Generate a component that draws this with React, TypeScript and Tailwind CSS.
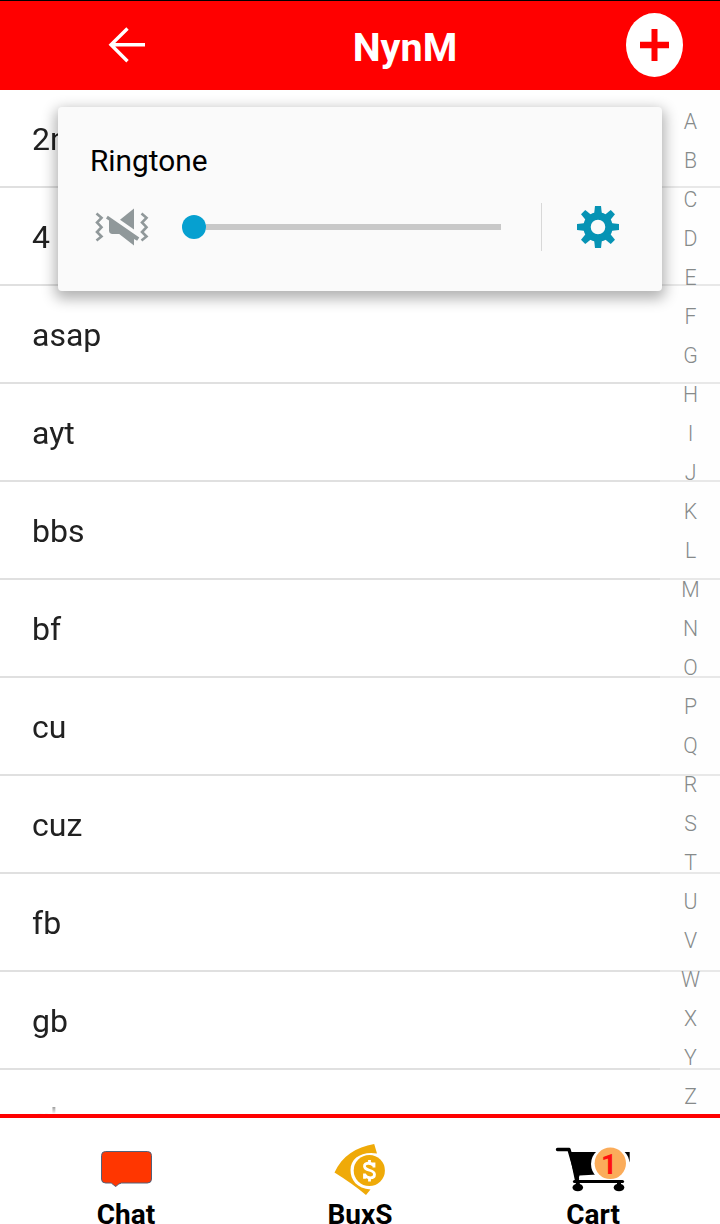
const words = ["2nite", "4", "asap", "ayt", "bbs", "bf", "cu", "cuz", "fb", "gb", "gl"];
const letters = "ABCDEFGHIJKLMNOPQRSTUVWXYZ".split("");

function BackArrow() {
  return (
    <svg className="-mt-px ml-[108px] h-9 w-10" viewBox="0 0 40 36" fill="none" stroke="#fff" strokeWidth="3.4">
      <path d="M19.500 1.500 3 17.800l16.500 16.400M3 17.800h34" />
    </svg>
  );
}

function AddButton() {
  return (
    <svg className="-mt-px h-16 w-[57px]" viewBox="0 0 57 64">
      <ellipse cx="28.5" cy="32" rx="28.5" ry="32" fill="#fff" />
      <path d="M25.500 16h6v12.800H43v6.400H31.500V48h-6V35.200H14v-6.400h11.500z" fill="#f00" />
    </svg>
  );
}

function MutedVibrate() {
  return (
    <svg className="h-10 w-[54px]" viewBox="0 0 54 40">
      <g fill="none" stroke="#90989a" strokeWidth="2.6">
        <path d="M1.500 6.500 6.500 10.800 2 15.500l4.500 4.700L2 25l4.500 4.500-5 4" />
        <path d="M46.500 6.500 51.500 10.800 47 15.500l4.500 4.700L47 25l4.500 4.500-5 4" />
      </g>
      <g fill="#90989a">
        <path d="M25 12.800 39 1.500v21z" />
        <path d="M12.800 8.800 44.300 30.500l-2.200 3.300L39 32v6.600L24.200 27H17q-3-.5-3-3.500V13.500L11 11.400z" />
      </g>
    </svg>
  );
}

function Gear() {
  return (
    <svg className="h-[42px] w-[42px]" viewBox="-21 -21 42 42" fill="#0693b4">
      <circle r="11" fill="none" stroke="#0693b4" strokeWidth="7.4" />
      {[0, 45, 90, 135, 180, 225, 270, 315].map((a) => (
        <path key={a} d="M-4-12-3-21H3L4-12z" transform={`rotate(${a})`} />
      ))}
    </svg>
  );
}

function VolumePanel() {
  return (
    <div className="absolute left-[58px] top-[107px] h-[184px] w-[604px] rounded bg-[#fafafa] shadow-[0_5px_14px_3px_rgba(0,0,0,0.3)]">
      <div className="pl-8 pt-9 text-[29.8px] leading-9 text-black">Ringtone</div>
      <div className="mt-6 flex h-12 items-center">
        <div className="ml-[37px]"><MutedVibrate /></div>
        <div className="ml-[33px] flex w-[319px] items-center">
          <div className="h-6 w-6 rounded-full bg-[#06a0d0]" />
          <div className="h-1.5 flex-1 bg-[#c8c8c8]" />
        </div>
        <div className="ml-10 h-12 w-px bg-[#d8d8d8]" />
        <div className="ml-[35px]"><Gear /></div>
      </div>
    </div>
  );
}

function ChatIcon() {
  return (
    <svg className="h-[54px] w-[54px]" viewBox="0 0 54 54">
      <path d="M6.500 9.500H48.500q4 0 4 4v23.500q0 4-4 4H22.500Q19 41.500 17 44.500Q14.500 43.500 12.500 41H6.500q-4 0-4-4V13.500q0-4 4-4z" fill="#ff3600" stroke="#536079" strokeWidth="1" />
    </svg>
  );
}

function BuxIcon() {
  return (
    <svg className="h-[54px] w-[54px]" viewBox="0 0 54 54">
      <path d="M1.500 30.500C9 14 23 5 41.200 2L44 11.500C29 9 17.500 16 17.500 28C17.500 38 24 46.500 37.500 47.500L33 53Q20 42 1.500 30.500z" fill="#efaa08" />
      <circle cx="36.300" cy="28.500" r="15.600" fill="#efaa08" />
      <path d="M41 25.500V20.500M41 24C38 20 31 20.500 31.500 24.500C32 29.500 41.500 27 41.500 32.500C41.500 37 34 37 31.500 32.500M31.500 31.500V36.800M36.500 18V21.500M36.500 35.500V39.500" fill="none" stroke="#fff" strokeWidth="2.800" />
    </svg>
  );
}

function CartIcon() {
  return (
    <svg className="h-[54px] w-[78px]" viewBox="0 0 78 54">
      <path d="M3.500 7.500H15L23.500 37" fill="none" stroke="#000" strokeWidth="3.400" strokeLinecap="round" strokeLinejoin="round" />
      <path d="M15 10H75.700V19L70 31L25.500 33.500L24 39H21z" fill="#000" />
      <ellipse cx="56.300" cy="22" rx="19.300" ry="18" fill="#fff" />
      <circle cx="56.300" cy="21.300" r="15.700" fill="#fbac5a" />
      <path d="M20.500 39.500H68.500" stroke="#000" strokeWidth="3.200" strokeLinecap="round" />
      <ellipse cx="23.800" cy="45.500" rx="5.300" ry="3.800" />
      <ellipse cx="65" cy="45.500" rx="5.300" ry="3.800" />
      <path d="M23.800 40V43M65 40V43" stroke="#000" strokeWidth="4" />
      <text x="55" y="32" textAnchor="middle" fontFamily="Roboto, sans-serif" fontSize="28" fontWeight="700" fill="#ff1010">1</text>
    </svg>
  );
}

export default function App() {
  return (
    <div className="relative flex h-[1224px] w-[720px] flex-col overflow-hidden bg-white font-['Roboto',sans-serif]">
      <header className="grid h-[90px] shrink-0 grid-cols-[270px_270px_180px] items-center border-t border-black bg-[#f00]">
        <BackArrow />
        <h1 className="mt-1 text-center text-[39.5px] font-bold leading-[48px] text-white">NynM</h1>
        <div className="pl-[86px]"><AddButton /></div>
      </header>

      <main className="relative h-[1024px] shrink-0 overflow-hidden">
        <ul className="h-full overflow-hidden [mask-image:linear-gradient(to_bottom,black_1008px,transparent_1024px)]">
          {words.map((w) => (
            <li key={w} className="flex h-[98px] items-center border-b-2 border-[#e0e0e0] pl-8 pt-0.5 text-[32px] leading-10 text-[#212121]">{w}</li>
          ))}
        </ul>
        <nav className="absolute right-0 top-0 flex h-full w-[60px] flex-col bg-[#fdfdfd]/30 pt-3 text-center text-[21.3px] font-light leading-[39px] text-[#868a8a]">
          {letters.map((l) => <span key={l} className="h-[39px] shrink-0 pl-px">{l}</span>)}
        </nav>
      </main>

      <footer className="grid h-[110px] shrink-0 grid-cols-[252px_216px_252px] border-t-4 border-[#f00] bg-white text-center text-[28px] font-bold leading-8 text-black">
        <div className="flex flex-col items-center pt-6"><ChatIcon /><span className="mt-[3px]">Chat</span></div>
        <div className="flex flex-col items-center pt-6"><BuxIcon /><span className="mt-[3px]">BuxS</span></div>
        <div className="flex flex-col items-center pr-0.5 pt-6"><CartIcon /><span className="mt-[3px]">Cart</span></div>
      </footer>

      <VolumePanel />
    </div>
  );
}
